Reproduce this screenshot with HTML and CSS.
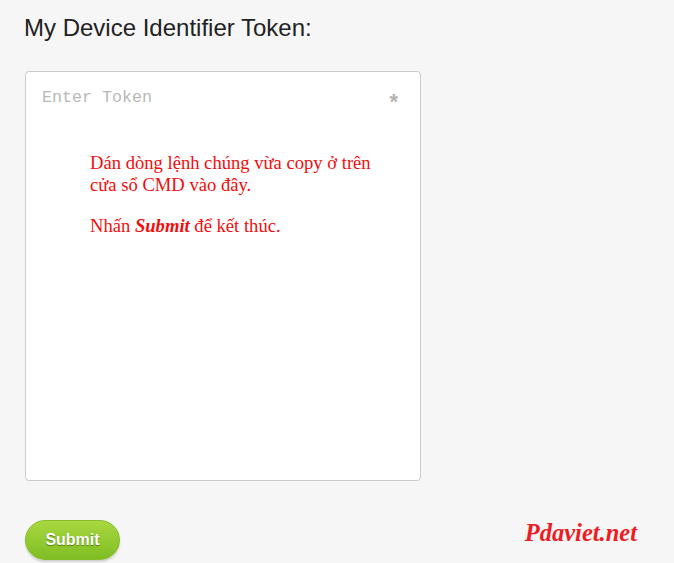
FILE: index.html
```html
<!DOCTYPE html>
<html lang="vi">
<head>
    <meta charset="UTF-8">
    <title>My Device Identifier Token</title>
    <link rel="stylesheet" href="styles.css">
</head>
<body>
    <div class="page">
        <h1 class="title">My Device Identifier Token:</h1>

        <div class="token-box">
            <div class="token-head">
                <span class="placeholder">Enter Token</span>
                <span class="required">*</span>
            </div>
            <div class="hint">
                <p>Dán dòng lệnh chúng vừa copy ở trên<br>cửa sổ CMD vào đây.</p>
                <p>Nhấn <b><i>Submit</i></b> để kết thúc.</p>
            </div>
        </div>

        <div class="footer">
            <button class="submit-button">Submit</button>
            <span class="brand">Pdaviet.net</span>
        </div>
    </div>
</body>
</html>
```

FILE: styles.css
```css
html, body {
    margin: 0;
    height: 100%;
}
body {
    background: #f6f6f6;
    font-family: "Liberation Sans", Arial, sans-serif;
}
.page {
    padding: 14px 0 0 25px;
}
.title {
    margin: 0 0 29px -1px;
    font-size: 24px;
    font-weight: normal;
    line-height: 28px;
    color: #222;
}
.token-box {
    width: 394px;
    height: 408px;
    background: #fff;
    border: 1px solid #cbcbcb;
    border-radius: 4px;
    box-sizing: content-box;
}
.token-head {
    display: flex;
    justify-content: space-between;
    padding: 16px 22px 0 16px;
    height: 20px;
    line-height: 20px;
}
.placeholder {
    font-family: "Liberation Mono", "Courier New", monospace;
    font-size: 16.67px;
    color: #b8b8b8;
}
.required {
    font-family: "Liberation Sans", Arial, sans-serif;
    font-size: 22px;
    font-weight: bold;
    color: #b3b3b3;
    padding-top: 4px;
}
.hint {
    padding: 44px 40px 0 64px;
    font-family: "Liberation Serif", "Times New Roman", serif;
    font-size: 18.6px;
    line-height: 22px;
    color: #f20d0d;
}
.hint p {
    margin: 0 0 19px 0;
}
.footer {
    display: flex;
    justify-content: space-between;
    align-items: center;
    margin-top: 39px;
    padding-right: 37px;
}
.submit-button {
    width: 95px;
    height: 40px;
    border: 1px solid #86bb2a;
    border-radius: 20px;
    background: linear-gradient(#a9d83f, #7fbd24);
    color: #fff;
    font-family: "Liberation Sans", Arial, sans-serif;
    font-size: 16px;
    font-weight: bold;
    text-shadow: 0 1px 1px #557a14;
    box-shadow: 0 2px 2px rgba(0, 0, 0, 0.15);
    cursor: pointer;
}
.brand {
    font-family: "Liberation Serif", "Times New Roman", serif;
    font-size: 24.5px;
    font-weight: bold;
    font-style: italic;
    color: #ee1c24;
    margin-top: -15px;
}
```
